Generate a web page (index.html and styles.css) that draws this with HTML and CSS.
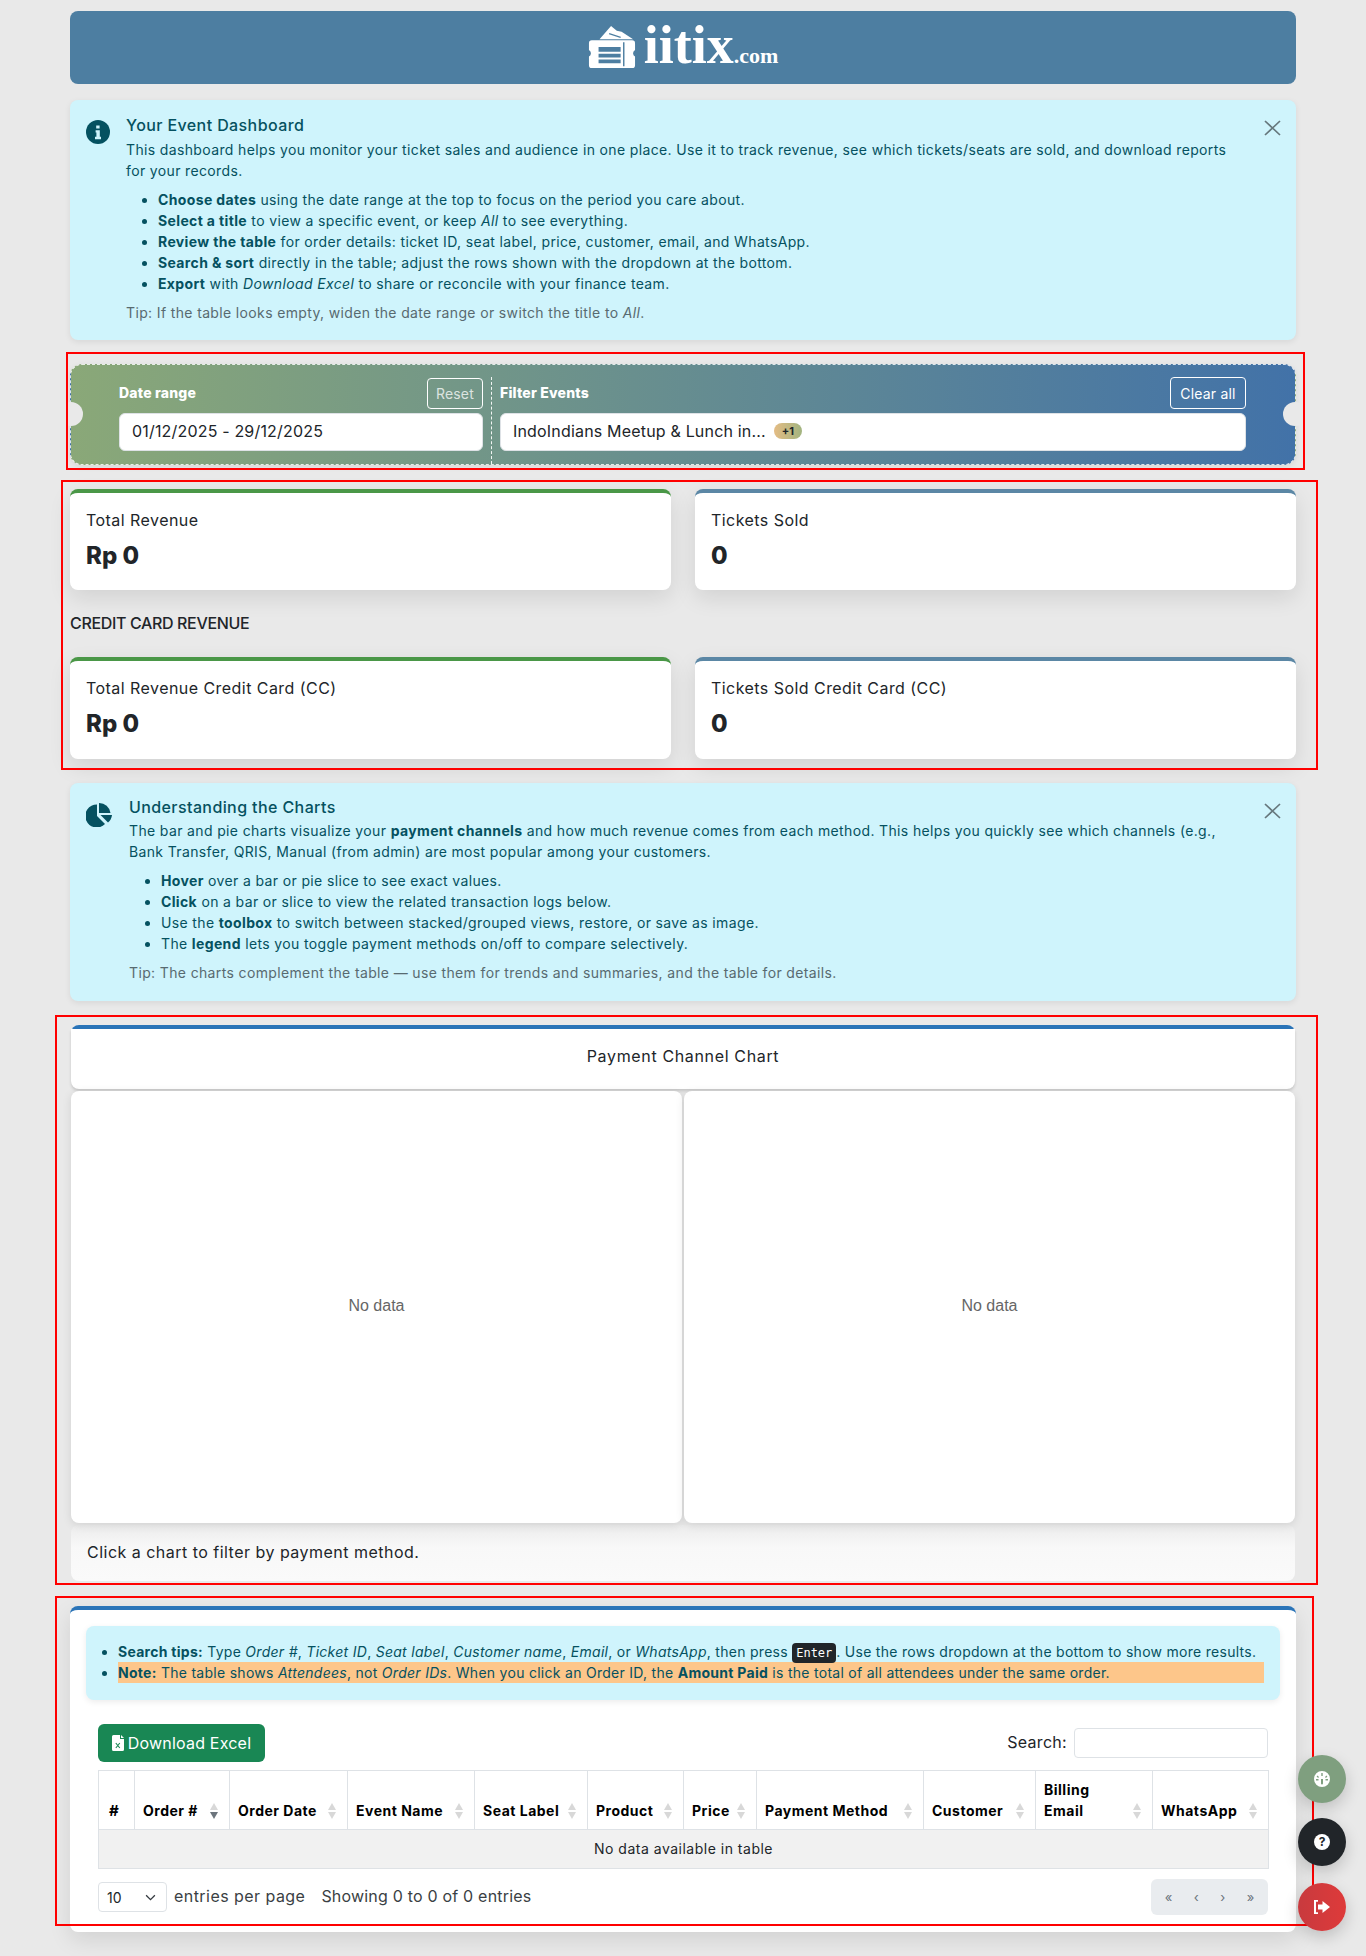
FILE: index.html
```html
<!DOCTYPE html>
<html lang="en">
<head>
<meta charset="utf-8">
<title>Your Event Dashboard</title>
<link rel="stylesheet" href="styles.css">
</head>
<body>
<div class="page">
  <header class="brand">
    <svg class="brand-icon" viewBox="0 0 50 44" width="48" height="44"><path fill="#fff" d="M24 0 L30 5 L35 6 L47 14 L12 14 Z"/><path fill="none" stroke="#4d7ea1" stroke-width="1.300" d="M22 8 L34 12"/><path fill="#fff" fill-rule="evenodd" d="M4 15 H46 a3 3 0 0 1 3 3 V25 a4 4 0 0 0 0 7 V41 a3 3 0 0 1 -3 3 H4 a3 3 0 0 1 -3 -3 V32 a4 4 0 0 0 0 -7 V18 a3 3 0 0 1 3 -3 Z M11 22 V27 H34 V22 Z M11 29 V33 H34 V29 Z M11 35 V39 H34 V35 Z M36.500 17 V42 H38 V17 Z"/></svg>
    <span class="brand-text">iitix<small>.com</small></span>
  </header>

  <section class="note note-one">
    <svg class="note-icon" viewBox="0 0 24 24" width="24" height="24"><circle cx="12" cy="12" r="12" fill="#055160"/><path fill="#cff4fc" d="M10.200 5.400h3.400v3h-3.400zM9.600 10.200h4.200v6.600h1.200v2.400H9v-2.400h1.400v-4.200H9.600z"/></svg>
    <div class="note-body">
      <h5 class="note-title">Your Event Dashboard</h5>
      <p class="note-lead">This dashboard helps you monitor your ticket sales and audience in one place. Use it to track revenue, see which tickets/seats are sold, and download reports<br>for your records.</p>
      <ul class="note-list">
        <li><b>Choose dates</b> using the date range at the top to focus on the period you care about.</li>
        <li><b>Select a title</b> to view a specific event, or keep <i>All</i> to see everything.</li>
        <li><b>Review the table</b> for order details: ticket ID, seat label, price, customer, email, and WhatsApp.</li>
        <li><b>Search &amp; sort</b> directly in the table; adjust the rows shown with the dropdown at the bottom.</li>
        <li><b>Export</b> with <i>Download Excel</i> to share or reconcile with your finance team.</li>
      </ul>
      <p class="note-tip">Tip: If the table looks empty, widen the date range or switch the title to <i>All</i>.</p>
    </div>
    <svg class="note-close" viewBox="0 0 17 16" width="17" height="16"><path d="M1 1L16 15M16 1L1 15" stroke="#66777c" stroke-width="1.700" fill="none"/></svg>
  </section>

  <div class="filter-wrap">
    <section class="filter">
      <div class="filter-group filter-date">
        <div class="filter-head"><label>Date range</label><button class="ghost">Reset</button></div>
        <div class="field">01/12/2025 - 29/12/2025</div>
      </div>
      <div class="filter-group filter-events">
        <div class="filter-head"><label>Filter Events</label><button class="ghost bright">Clear all</button></div>
        <div class="field">IndoIndians Meetup &amp; Lunch in...<span class="pill">+1</span></div>
      </div>
    </section>
    <div class="mark mark-filter"></div>
  </div>

  <div class="stats-wrap">
    <div class="stats">
      <div class="stat green"><div class="stat-label">Total Revenue</div><div class="stat-value">Rp 0</div></div>
      <div class="stat blue"><div class="stat-label">Tickets Sold</div><div class="stat-value">0</div></div>
    </div>
    <h6 class="stats-title">CREDIT CARD REVENUE</h6>
    <div class="stats stats-cc">
      <div class="stat green"><div class="stat-label">Total Revenue Credit Card (CC)</div><div class="stat-value">Rp 0</div></div>
      <div class="stat blue"><div class="stat-label">Tickets Sold Credit Card (CC)</div><div class="stat-value">0</div></div>
    </div>
    <div class="mark mark-stats"></div>
  </div>

  <section class="note note-two">
    <svg class="note-icon pie" viewBox="0 0 26 24" width="26" height="24"><path fill="#055160" d="M11 1.500V13l8 8A11.500 11.500 0 1 1 11 1.500Z"/><path fill="#055160" d="M13 0A11.500 11.500 0 0 1 24.500 10H13Z"/><path fill="#055160" d="M14.500 12H26A11.500 11.500 0 0 1 22 19.500Z"/></svg>
    <div class="note-body">
      <h5 class="note-title">Understanding the Charts</h5>
      <p class="note-lead">The bar and pie charts visualize your <b>payment channels</b> and how much revenue comes from each method. This helps you quickly see which channels (e.g.,<br>Bank Transfer, QRIS, Manual (from admin) are most popular among your customers.</p>
      <ul class="note-list">
        <li><b>Hover</b> over a bar or pie slice to see exact values.</li>
        <li><b>Click</b> on a bar or slice to view the related transaction logs below.</li>
        <li>Use the <b>toolbox</b> to switch between stacked/grouped views, restore, or save as image.</li>
        <li>The <b>legend</b> lets you toggle payment methods on/off to compare selectively.</li>
      </ul>
      <p class="note-tip">Tip: The charts complement the table — use them for trends and summaries, and the table for details.</p>
    </div>
    <svg class="note-close" viewBox="0 0 17 16" width="17" height="16"><path d="M1 1L16 15M16 1L1 15" stroke="#66777c" stroke-width="1.700" fill="none"/></svg>
  </section>

  <div class="chart-wrap">
    <section class="chart-card">
      <div class="chart-head">Payment Channel Chart</div>
      <div class="chart-grid">
        <div class="chart-pane">No data</div>
        <div class="chart-pane">No data</div>
      </div>
      <div class="chart-foot">Click a chart to filter by payment method.</div>
    </section>
    <div class="mark mark-chart"></div>
  </div>

  <div class="table-wrap">
    <section class="table-card">
      <div class="search-note">
        <ul>
          <li><b>Search tips:</b> Type <i>Order #</i>, <i>Ticket ID</i>, <i>Seat label</i>, <i>Customer name</i>, <i>Email</i>, or <i>WhatsApp</i>, then press <kbd>Enter</kbd>. Use the rows dropdown at the bottom to show more results.</li>
          <li><span class="hl"><b>Note:</b> The table shows <i>Attendees</i>, not <i>Order IDs</i>. When you click an Order ID, the <b>Amount Paid</b> is the total of all attendees under the same order.</span></li>
        </ul>
      </div>
      <div class="tools">
        <button class="xls"><svg viewBox="0 0 12 16" width="12" height="16"><path fill="#fff" d="M0 1.500A1.500 1.500 0 0 1 1.500 0H8v4h4v10.500a1.500 1.500 0 0 1-1.500 1.500h-9A1.500 1.500 0 0 1 0 14.500Z"/><path fill="#fff" d="M9 0l3 3H9z"/><path stroke="#198754" stroke-width="1.100" d="M3.800 8l4 5M7.800 8l-4 5"/></svg>Download Excel</button>
        <label class="search"><span class="search-label">Search:</span><span class="search-box"></span></label>
      </div>
      <table class="grid">
        <thead>
          <tr>
            <th class="c1">#</th>
            <th class="c2 sort asc">Order #</th>
            <th class="c3 sort">Order Date</th>
            <th class="c4 sort">Event Name</th>
            <th class="c5 sort">Seat Label</th>
            <th class="c6 sort">Product</th>
            <th class="c7 sort">Price</th>
            <th class="c8 sort">Payment Method</th>
            <th class="c9 sort">Customer</th>
            <th class="c10 sort">Billing Email</th>
            <th class="c11 sort">WhatsApp</th>
          </tr>
        </thead>
        <tbody><tr><td colspan="11">No data available in table</td></tr></tbody>
      </table>
      <div class="pager-row">
        <div class="select">10<svg viewBox="0 0 12 8" width="11" height="7"><path d="M1 1.500l5 5 5-5" stroke="#343a40" stroke-width="1.500" fill="none"/></svg></div>
        <span class="per-page">entries per page</span>
        <span class="showing">Showing 0 to 0 of 0 entries</span>
        <div class="pager"><span>«</span><span>‹</span><span>›</span><span>»</span></div>
      </div>
    </section>
    <div class="mark mark-table"></div>
  </div>
</div>

<div class="fabs">
  <button class="fab fab-green"><svg viewBox="0 0 16 16" width="16" height="16"><path fill="#fff" fill-rule="evenodd" d="M8 0a8 8 0 1 1 0 16A8 8 0 0 1 8 0Zm-.7 2v3h1.400V2ZM3.500 4.500l-.9.9 1.500 1.500.9-.9ZM12.500 4.500l-1.500 1.500.9.900 1.500-1.500ZM2 8v1.400h2.500V8Zm9.500 0v1.400H14V8ZM7 8v4.500a1 1 0 1 0 2 0V8Z"/></svg></button>
  <button class="fab fab-dark"><svg viewBox="0 0 16 16" width="16" height="16"><circle cx="8" cy="8" r="8" fill="#fff"/><text x="8" y="12" text-anchor="middle" class="fab-q">?</text></svg></button>
  <button class="fab fab-red"><svg viewBox="0 0 18 16" width="18" height="16"><path fill="#fff" d="M1 1h4v1.800H3v10.400h2V15H1ZM9.500 2l7.500 6-7.500 6v-3.600H5V5.600h4.500Z"/></svg></button>
</div>
</body>
</html>
```
FILE: styles.css
```css
* { box-sizing: border-box; }
html, body { margin: 0; padding: 0; }
body {
  background: #e9e9e9;
  color: #212529;
  font-family: "Inter", "Open Sans", sans-serif;
  font-size: 14px;
  line-height: 21px;
  height: 1956px;
  overflow: hidden;
  position: relative;
}
.page { width: 1226px; margin: 0 auto; padding-top: 11px; }

.brand {
  height: 73px;
  background: #4d7ea1;
  border-radius: 8px;
  display: flex;
  align-items: center;
  justify-content: center;
  gap: 8px;
  color: #fff;
}
.brand-icon { margin-top: -1px; }
.brand-text {
  font-family: "Liberation Serif", serif;
  font-weight: 700;
  font-size: 54px;
  line-height: 54px;
  margin-top: 5px;
}
.brand-text small { font-size: 22px; font-weight: 700; }

.note {
  position: relative;
  background: #cff4fc;
  color: #055160;
  border-radius: 8px;
  box-shadow: 0 2px 6px rgba(0,0,0,.08);
  display: flex;
}
.note-one { margin-top: 16px; height: 240px; padding: 15px 16px 0; gap: 16px; }
.note-two { margin-top: 24px; height: 218px; padding: 14px 16px 0; gap: 17px; }
.note-two .note-title { margin-bottom: 3px; }
.note-icon { flex: none; margin-top: 5px; }
.note-icon.pie { margin-top: 6px; }
.note-body { flex: 1; min-width: 0; }
.note-title { margin: 0 0 4px; font-size: 16px; line-height: 20px; font-weight: 500; letter-spacing: .4px; }
.note-lead { margin: 0; font-size: 14px; line-height: 21px; letter-spacing: .36px; }
.note-list { margin: 8px 0 0; padding-left: 32px; font-size: 14px; line-height: 21px; letter-spacing: .36px; }
.note-list b, .note-lead b { font-weight: 700; }
.note-tip { margin: 8px 0 0; font-size: 14px; line-height: 21px; color: #586a70; letter-spacing: .36px; }
.note-close { position: absolute; top: 20px; right: 15px; }

.filter-wrap { position: relative; margin-top: 24px; }
.filter {
  height: 101px;
  border: 1px dashed rgba(255,255,255,.8);
  border-radius: 12px;
  background: linear-gradient(90deg, #8aa878 0%, #4272a8 100%);
  padding: 12px 49px 0 48px;
  display: flex;
  position: relative;
  box-shadow: 0 2px 6px rgba(0,0,0,.08);
}
.filter::before, .filter::after {
  content: "";
  position: absolute;
  top: 37px;
  width: 24px;
  height: 24px;
  border-radius: 50%;
  background: #e9e9e9;
}
.filter::before { left: -12px; }
.filter::after { right: -12px; }
.filter-group { display: flex; flex-direction: column; gap: 4px; }
.filter-date { width: 373px; padding-right: 8px; border-right: 1px dashed rgba(255,255,255,.9); }
.filter-events { flex: 1; padding-left: 8px; }
.filter-head { height: 32px; display: flex; align-items: center; justify-content: space-between; }
.filter-head label { color: #fff; font-size: 14px; font-weight: 800; letter-spacing: .2px; padding-bottom: 2px; }
.ghost {
  height: 31px;
  padding: 0 8px;
  border: 1px solid #fff;
  border-radius: 4px;
  background: transparent;
  color: rgba(255,255,255,.75);
  font: 14px "Inter", sans-serif;
  letter-spacing: .2px;
}
.ghost.bright { color: #fff; width: 76px; height: 32px; }
.field {
  height: 38px;
  background: #fff;
  border: 1px solid #dee2e6;
  border-radius: 6px;
  padding: 0 12px 2px;
  display: flex;
  align-items: center;
  font-size: 16px;
  color: #212529;
  letter-spacing: .18px;
}
.pill {
  margin-left: 8px;
  width: 28px;
  height: 16px;
  background: linear-gradient(90deg, #e4bc84, #a2b480);
  color: #212529;
  font-size: 11px;
  line-height: 16px;
  font-weight: 700;
  text-align: center;
  border-radius: 8px;
  letter-spacing: 0;
}

.stats-wrap { position: relative; margin-top: 24px; }
.stats { display: grid; grid-template-columns: 601px 601px; gap: 24px; }
.stat {
  height: 101px;
  background: #fff;
  border-top: 4px solid #4a9747;
  border-radius: 8px;
  padding: 15px 16px 0;
  box-shadow: 0 8px 22px rgba(0,0,0,.1);
}
.stats-cc .stat { height: 102px; }
.stat.blue { border-top-color: #5b87a5; }
.stat-label { font-size: 16px; line-height: 24px; letter-spacing: .45px; }
.stat-value { font-size: 24px; line-height: 32px; font-weight: 800; margin-top: 8px; }
.stats-title { margin: 21px 0 22px; font-size: 16px; line-height: 24px; font-weight: 500; letter-spacing: -.35px; }

.chart-wrap { position: relative; margin-top: 24px; }
.chart-card { border-top: 4px solid #2a74b8; border-radius: 8px 8px 0 0; margin: 0 1px; }
.chart-head {
  height: 60px;
  padding-bottom: 6px;
  background: #fff;
  border-radius: 0 0 8px 8px;
  display: flex;
  align-items: center;
  justify-content: center;
  font-size: 16px;
  letter-spacing: .65px;
  box-shadow: 0 2px 3px rgba(0,0,0,.15);
}
.chart-grid { display: flex; gap: 2px; margin-top: 2px; }
.chart-pane {
  flex: 1;
  height: 432px;
  padding-bottom: 2px;
  background: #fff;
  border-radius: 8px;
  display: flex;
  align-items: center;
  justify-content: center;
  font: 16px "Liberation Sans", sans-serif;
  color: #666;
  box-shadow: 0 2px 10px rgba(0,0,0,.1);
}
.chart-foot {
  margin-top: 2px;
  height: 56px;
  padding: 0 16px 2px;
  display: flex;
  align-items: center;
  background: linear-gradient(#ececec 0%, #f8f8f8 40%, #fafafa 100%);
  border-radius: 8px;
  font-size: 16px;
  letter-spacing: .48px;
}

.table-wrap { position: relative; margin-top: 25px; }
.table-card {
  height: 326px;
  background: #fff;
  border-top: 4px solid #2a74b8;
  border-radius: 8px;
  padding: 16px 16px 0;
  box-shadow: 0 8px 22px rgba(0,0,0,.1);
}
.search-note {
  height: 74px;
  background: #cff4fc;
  color: #055160;
  border-radius: 8px;
  padding: 15px 16px 0 0;
  box-shadow: 0 2px 6px rgba(0,0,0,.08);
  font-size: 14px;
  line-height: 21px;
  letter-spacing: .28px;
}
.search-note ul { margin: 0; padding-left: 32px; }
.hl { display: block; background: #fdc68a; }
kbd {
  background: #212529;
  color: #fff;
  font: 12px/14px "DejaVu Sans Mono", monospace;
  letter-spacing: 0;
  padding: 3px 4px;
  border-radius: 4px;
}
.tools { display: flex; justify-content: space-between; align-items: center; margin: 24px 12px 0; height: 38px; }
.xls {
  height: 38px;
  width: 167px;
  background: #198754;
  border: 0;
  border-radius: 6px;
  color: #fff;
  font: 16px "Inter", sans-serif;
  letter-spacing: .2px;
  display: flex;
  align-items: center;
  justify-content: center;
  gap: 4px;
}
.search { display: flex; align-items: center; gap: 7px; font-size: 16px; letter-spacing: .3px; }
.search-label { padding-bottom: 2px; }
.search-box { width: 194px; height: 30px; background: #fff; border: 1px solid #dee2e6; border-radius: 4px; }

.grid {
  margin: 8px 12px 0;
  width: 1170px;
  table-layout: fixed;
  border-collapse: collapse;
  font-size: 14px;
}
.grid th, .grid td { border: 1px solid #dee2e6; }
.grid th {
  height: 59px;
  padding: 6px 26px 8px 8px;
  text-align: left;
  vertical-align: bottom;
  line-height: 21px;
  font-weight: 700;
  color: #000;
  position: relative;
  letter-spacing: .5px;
}
.grid th.c1 { padding: 6px 4px 8px 10px; font-size: 15px; }
.c1 { width: 36px; }
.c2 { width: 95px; }
.c3 { width: 118px; }
.c4 { width: 127px; }
.c5 { width: 113px; }
.c6 { width: 96px; }
.c7 { width: 73px; }
.c8 { width: 167px; }
.c9 { width: 112px; }
.c10 { width: 117px; }
.c11 { width: 116px; }
.sort::before, .sort::after {
  content: "";
  position: absolute;
  right: 11px;
  border-left: 4px solid transparent;
  border-right: 4px solid transparent;
}
.sort::before { bottom: 19px; border-bottom: 7px solid #d8d8d8; }
.sort::after { bottom: 10px; border-top: 7px solid #d8d8d8; }
.sort.asc::after { border-top-color: #6c757d; }
.grid td {
  height: 39px;
  padding: 0 0 2px;
  background: #f1f1f1;
  text-align: center;
  font-size: 14px;
  color: #212529;
  letter-spacing: .5px;
}
.pager-row { display: flex; align-items: center; margin: 10px 12px 0; height: 36px; }
.select {
  width: 69px;
  height: 30px;
  border: 1px solid #dee2e6;
  border-radius: 4px;
  padding: 0 10px 0 8px;
  display: flex;
  align-items: center;
  justify-content: space-between;
  font-size: 14px;
}
.per-page { margin-left: 7px; margin-bottom: 2px; font-size: 16px; color: #3a3f44; letter-spacing: .45px; }
.showing { margin-left: 16px; margin-bottom: 2px; font-size: 16px; color: #3a3f44; letter-spacing: .2px; }
.pager {
  margin-left: auto;
  width: 117px;
  height: 36px;
  background: #e9ecef;
  border-radius: 6px;
  display: flex;
  align-items: center;
  justify-content: space-around;
  padding: 0 3px;
  font-size: 13px;
  color: #6c757d;
}

.mark { position: absolute; border: 2px solid #f00; pointer-events: none; }
.mark-filter { left: -4px; right: -9px; top: -12px; bottom: -5px; }
.mark-stats { left: -9px; right: -22px; top: -9px; bottom: -11px; }
.mark-chart { left: -15px; right: -22px; top: -10px; bottom: -4px; }
.mark-table { left: -15px; right: -18px; top: -10px; bottom: 6px; }

.fabs { position: absolute; right: 20px; top: 1755px; display: flex; flex-direction: column; align-items: center; }
.fab {
  width: 48px;
  height: 48px;
  border: 0;
  border-radius: 50%;
  display: flex;
  align-items: center;
  justify-content: center;
  padding: 0;
  box-shadow: 0 6px 16px rgba(0,0,0,.18);
}
.fab-green { background: #7f9f7f; }
.fab-dark { background: #212529; margin-top: 15px; }
.fab-red { background: linear-gradient(90deg, #c83a3e, #de3a3a); margin-top: 17px; }
.fab-q { font: 700 12px "Inter", sans-serif; fill: #212529; }
```
